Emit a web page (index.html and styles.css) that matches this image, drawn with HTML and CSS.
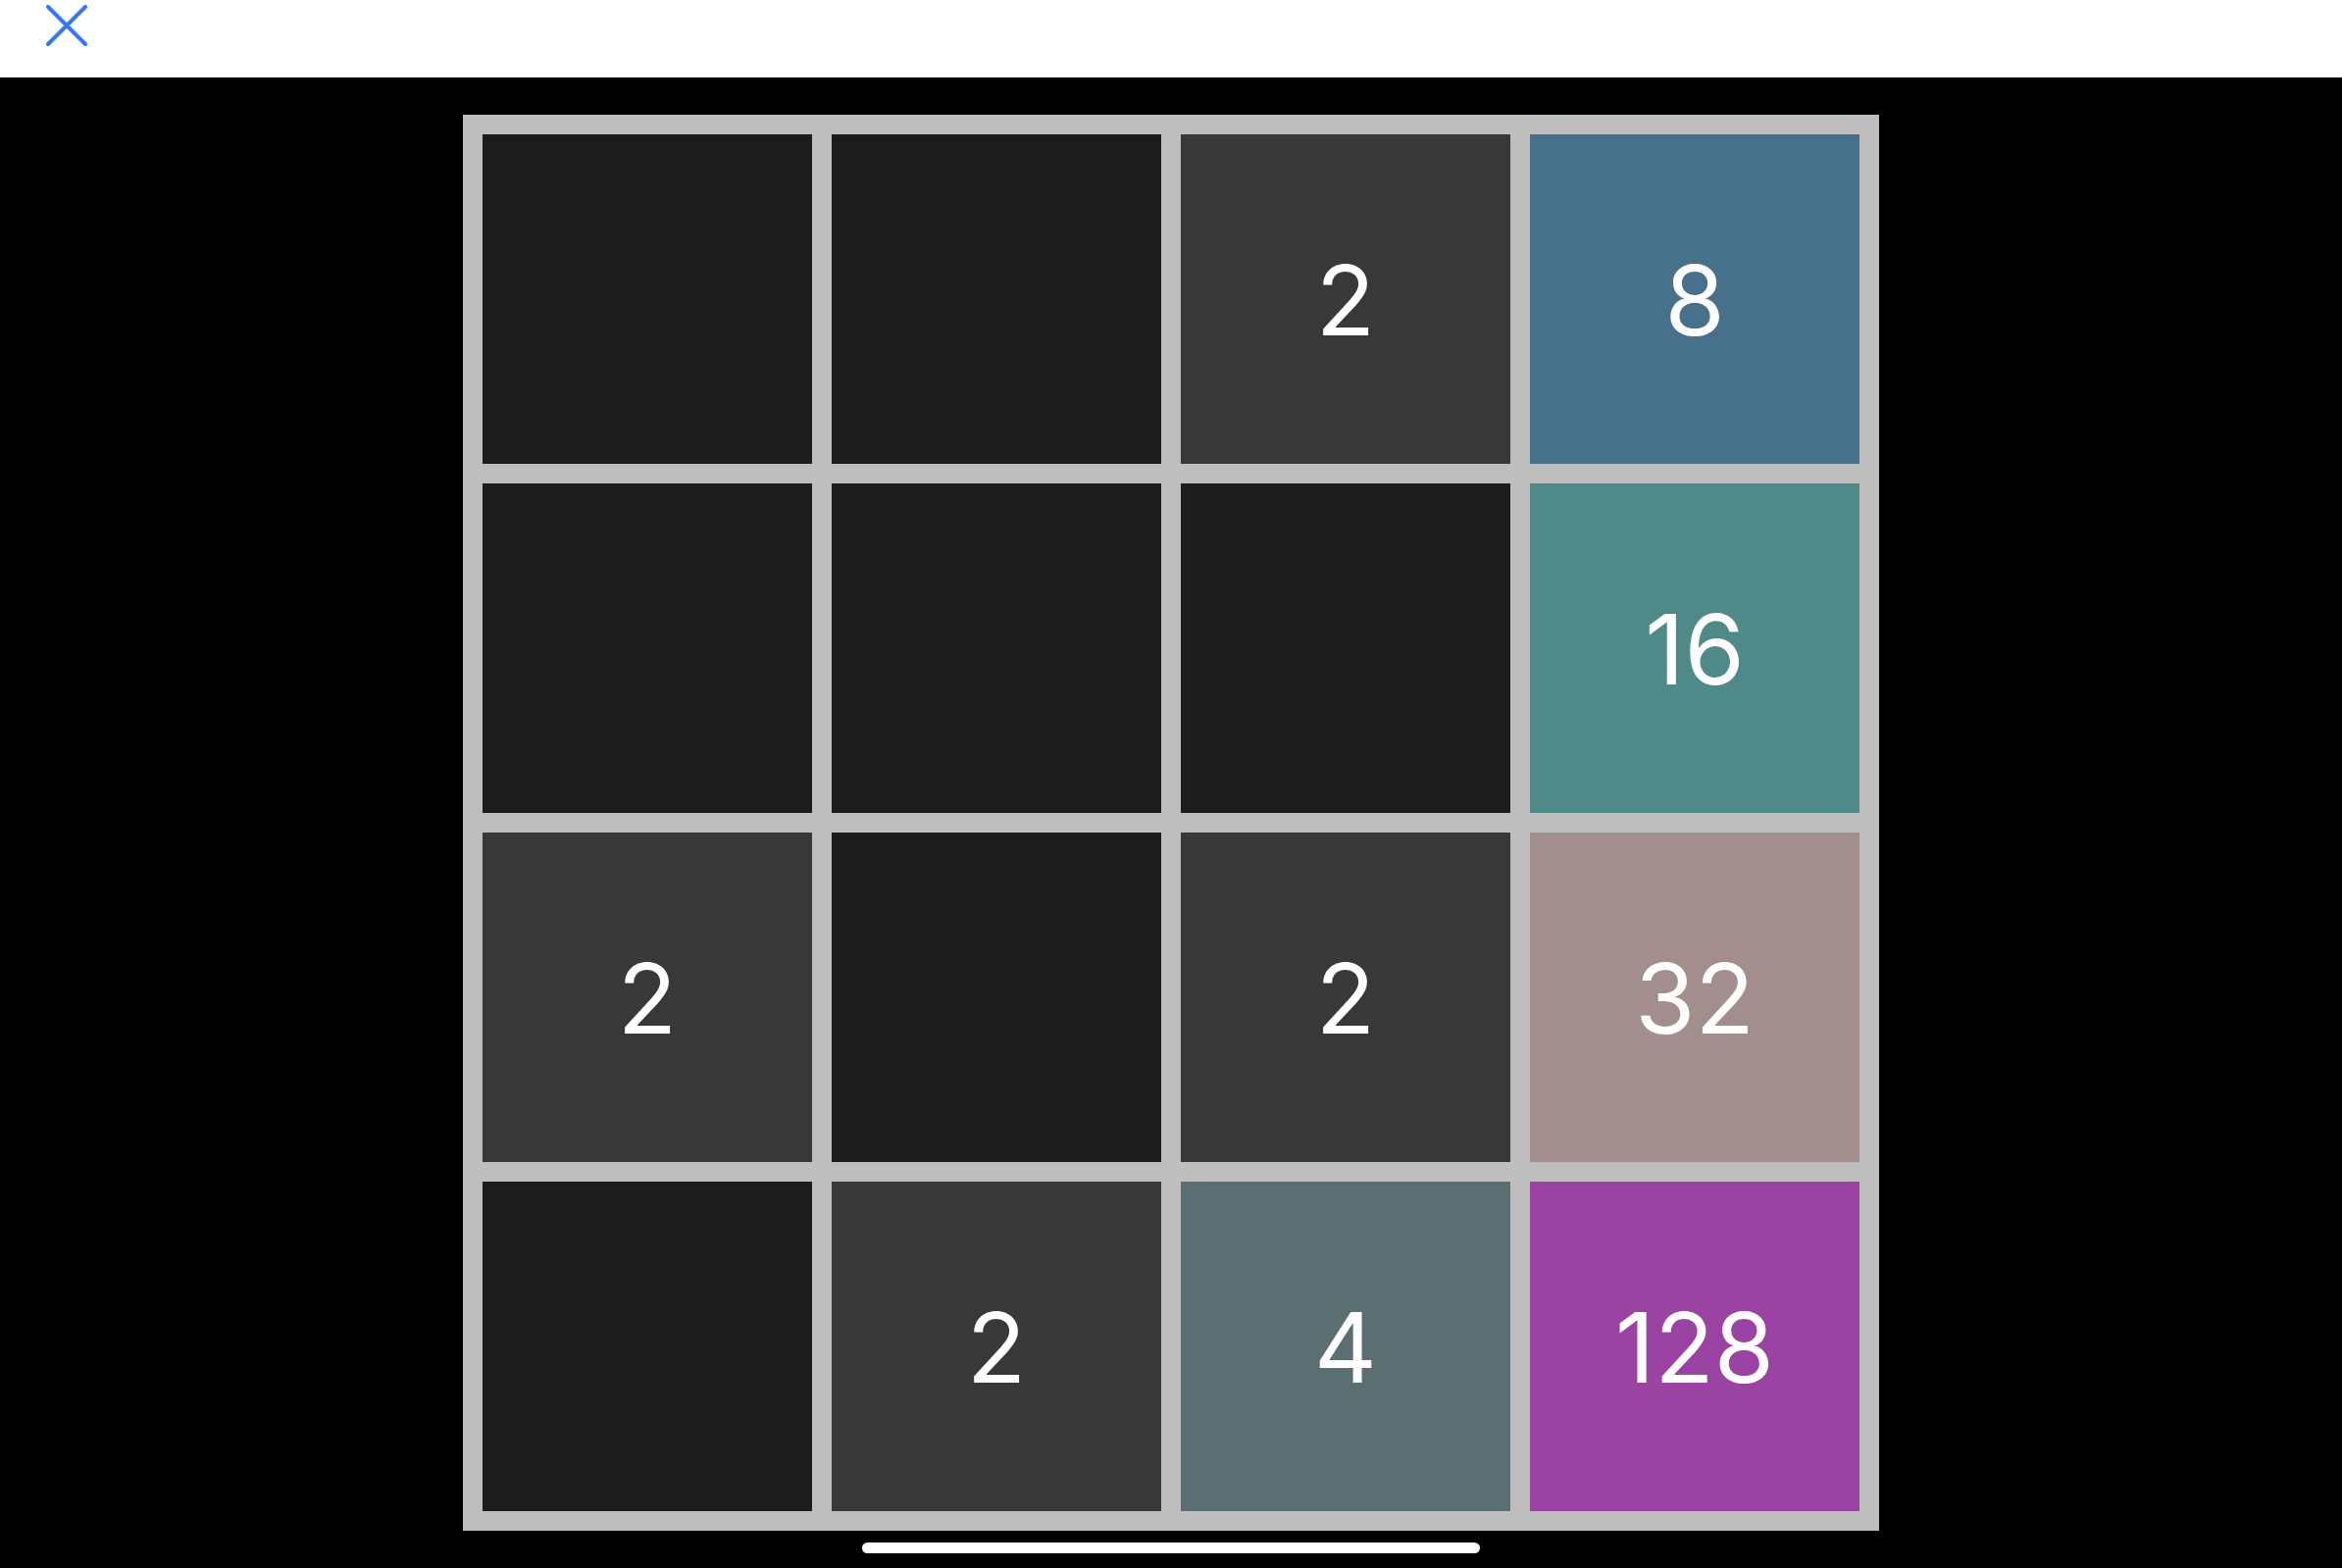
FILE: index.html
```html
<!DOCTYPE html>
<html lang="en">
<head>
  <meta charset="UTF-8" />
  <meta name="viewport" content="width=device-width, initial-scale=1.0"/>
  <title>2048</title>
  <link rel="stylesheet" href="styles.css">
</head>
<body>
  <div class="topbar">
    <button class="close" aria-label="Close">
      <svg width="42" height="42" viewBox="0 0 42 42">
        <path d="M2 2 L40 40 M40 2 L2 40" stroke="#3478f6" stroke-width="4" stroke-linecap="round" fill="none"/>
      </svg>
    </button>
  </div>

  <div class="game">
    <div class="board">
      <div class="tile"></div>
      <div class="tile"></div>
      <div class="tile t2">2</div>
      <div class="tile t8">8</div>

      <div class="tile"></div>
      <div class="tile"></div>
      <div class="tile"></div>
      <div class="tile t16">16</div>

      <div class="tile t2">2</div>
      <div class="tile"></div>
      <div class="tile t2">2</div>
      <div class="tile t32">32</div>

      <div class="tile"></div>
      <div class="tile t2">2</div>
      <div class="tile t4">4</div>
      <div class="tile t128">128</div>
    </div>
    <div class="home-bar"></div>
  </div>
</body>
</html>
```

FILE: styles.css
```css
* { margin: 0; padding: 0; box-sizing: border-box; }
html, body { height: 100%; }
body {
  background: #000;
  font-family: 'Inter', 'Liberation Sans', sans-serif;
  overflow: hidden;
}
.topbar {
  height: 79px;
  background: #fff;
  display: flex;
  align-items: flex-start;
  padding: 5px 0 0 47px;
}
.close {
  background: none;
  border: none;
  width: 42px;
  height: 42px;
  cursor: pointer;
}
.close svg { display: block; }
.game {
  display: flex;
  flex-direction: column;
  align-items: center;
  padding-top: 38px;
}
.board {
  display: grid;
  grid-template-columns: repeat(4, 336px);
  grid-auto-rows: 336px;
  gap: 20px;
  padding: 20px;
  background: #bebebe;
}
.tile {
  background: #1c1c1c;
  color: #fff;
  display: flex;
  justify-content: center;
  align-items: center;
  padding-top: 3px;
  font-size: 99px;
  font-weight: 400;
  line-height: 1;
}
.t2 { background: #383838; }
.t4 { background: #5b6e71; }
.t8 { background: #47708a; }
.t16 { background: #4f8a89; }
.t32 { background: #a28e8c; }
.t128 { background: #9a43a2; }
.home-bar {
  margin-top: 12px;
  width: 630px;
  height: 11px;
  border-radius: 6px;
  background: #fff;
}
```
